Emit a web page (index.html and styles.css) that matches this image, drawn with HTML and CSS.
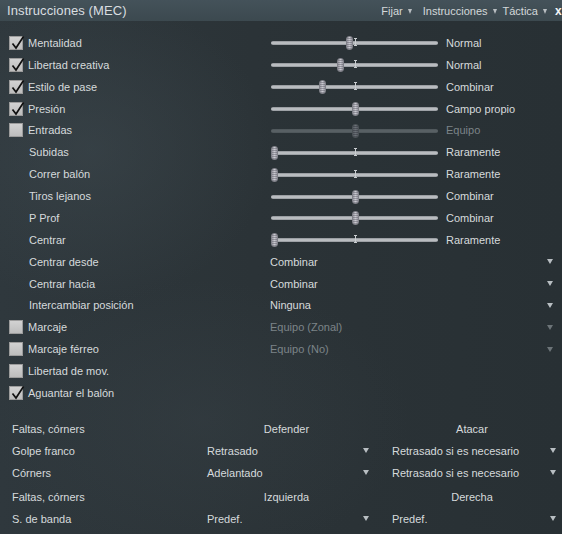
FILE: index.html
```html
<!DOCTYPE html>
<html lang="es">
<head>
<meta charset="utf-8">
<link rel="stylesheet" href="styles.css">
</head>
<body>
<div class="window">
  <div class="titlebar">
    <div class="title">Instrucciones (MEC)</div>
    <div class="menu">
      <span class="mi m1">Fijar<i class="tri"></i></span>
      <span class="mi m2">Instrucciones<i class="tri"></i></span>
      <span class="mi m3">Táctica<i class="tri"></i></span>
      <span class="close">x</span>
    </div>
  </div>

  <div class="list">
    <div class="row">
      <div class="left"><span class="chk on"><svg viewBox="0 0 14 14"><path d="M2.5 7.5 L6 12 L13.5 0.5"/></svg></span><span class="lab">Mentalidad</span></div>
      <div class="slider"><div class="track"></div><div class="mark" style="left:82.5px"></div><div class="thumb" style="left:74.5px"></div></div>
      <span class="val">Normal</span>
    </div>
    <div class="row">
      <div class="left"><span class="chk on"><svg viewBox="0 0 14 14"><path d="M2.5 7.5 L6 12 L13.5 0.5"/></svg></span><span class="lab">Libertad creativa</span></div>
      <div class="slider"><div class="track"></div><div class="mark" style="left:82.5px"></div><div class="thumb" style="left:65.5px"></div></div>
      <span class="val">Normal</span>
    </div>
    <div class="row">
      <div class="left"><span class="chk on"><svg viewBox="0 0 14 14"><path d="M2.5 7.5 L6 12 L13.5 0.5"/></svg></span><span class="lab">Estilo de pase</span></div>
      <div class="slider"><div class="track"></div><div class="mark" style="left:82.5px"></div><div class="thumb" style="left:47.5px"></div></div>
      <span class="val">Combinar</span>
    </div>
    <div class="row">
      <div class="left"><span class="chk on"><svg viewBox="0 0 14 14"><path d="M2.5 7.5 L6 12 L13.5 0.5"/></svg></span><span class="lab">Presión</span></div>
      <div class="slider"><div class="track"></div><div class="thumb" style="left:80.5px"></div></div>
      <span class="val">Campo propio</span>
    </div>
    <div class="row">
      <div class="left"><span class="chk"></span><span class="lab">Entradas</span></div>
      <div class="slider disabled"><div class="track"></div><div class="thumb" style="left:80.5px"></div></div>
      <span class="val dim">Equipo</span>
    </div>
    <div class="row">
      <div class="left"><span class="lab sub">Subidas</span></div>
      <div class="slider"><div class="track"></div><div class="mark" style="left:82.5px"></div><div class="thumb" style="left:0px"></div></div>
      <span class="val">Raramente</span>
    </div>
    <div class="row">
      <div class="left"><span class="lab sub">Correr balón</span></div>
      <div class="slider"><div class="track"></div><div class="mark" style="left:82.5px"></div><div class="thumb" style="left:0px"></div></div>
      <span class="val">Raramente</span>
    </div>
    <div class="row">
      <div class="left"><span class="lab sub">Tiros lejanos</span></div>
      <div class="slider"><div class="track"></div><div class="thumb" style="left:80.5px"></div></div>
      <span class="val">Combinar</span>
    </div>
    <div class="row">
      <div class="left"><span class="lab sub">P Prof</span></div>
      <div class="slider"><div class="track"></div><div class="thumb" style="left:80.5px"></div></div>
      <span class="val">Combinar</span>
    </div>
    <div class="row">
      <div class="left"><span class="lab sub">Centrar</span></div>
      <div class="slider"><div class="track"></div><div class="mark" style="left:82.5px"></div><div class="thumb" style="left:0px"></div></div>
      <span class="val">Raramente</span>
    </div>
    <div class="row">
      <div class="left"><span class="lab sub">Centrar desde</span></div>
      <div class="drop wide"><span>Combinar</span><i class="tri"></i></div>
    </div>
    <div class="row">
      <div class="left"><span class="lab sub">Centrar hacia</span></div>
      <div class="drop wide"><span>Combinar</span><i class="tri"></i></div>
    </div>
    <div class="row">
      <div class="left"><span class="lab sub">Intercambiar posición</span></div>
      <div class="drop wide"><span>Ninguna</span><i class="tri"></i></div>
    </div>
    <div class="row">
      <div class="left"><span class="chk"></span><span class="lab">Marcaje</span></div>
      <div class="drop wide dim"><span>Equipo (Zonal)</span><i class="tri"></i></div>
    </div>
    <div class="row">
      <div class="left"><span class="chk"></span><span class="lab">Marcaje férreo</span></div>
      <div class="drop wide dim"><span>Equipo (No)</span><i class="tri"></i></div>
    </div>
    <div class="row">
      <div class="left"><span class="chk"></span><span class="lab">Libertad de mov.</span></div>
    </div>
    <div class="row">
      <div class="left"><span class="chk on"><svg viewBox="0 0 14 14"><path d="M2.5 7.5 L6 12 L13.5 0.5"/></svg></span><span class="lab">Aguantar el balón</span></div>
    </div>
  </div>

  <div class="setp">
    <div class="sgrid">
      <span class="slab">Faltas, córners</span>
      <span class="head">Defender</span>
      <span class="head">Atacar</span>
      <span class="slab">Golpe franco</span>
      <div class="drop c1"><span>Retrasado</span><i class="tri"></i></div>
      <div class="drop c2"><span>Retrasado si es necesario</span><i class="tri"></i></div>
      <span class="slab">Córners</span>
      <div class="drop c1"><span>Adelantado</span><i class="tri"></i></div>
      <div class="drop c2"><span>Retrasado si es necesario</span><i class="tri"></i></div>
    </div>
    <div class="sgrid second">
      <span class="slab">Faltas, córners</span>
      <span class="head">Izquierda</span>
      <span class="head">Derecha</span>
      <span class="slab">S. de banda</span>
      <div class="drop c1"><span>Predef.</span><i class="tri"></i></div>
      <div class="drop c2"><span>Predef.</span><i class="tri"></i></div>
    </div>
  </div>
</div>
</body>
</html>
```
FILE: styles.css
```css
html, body {
  margin: 0;
  padding: 0;
}
body {
  width: 562px;
  height: 534px;
  overflow: hidden;
  font-family: "Liberation Sans", Arial, sans-serif;
  font-size: 11px;
  color: #d6dadc;
  background: #2b3337;
}
.window {
  width: 562px;
  height: 534px;
  background:
    radial-gradient(ellipse 260px 220px at 90px 150px, rgba(70, 82, 88, 0.35), rgba(0,0,0,0) 70%),
    radial-gradient(ellipse 300px 200px at 200px 420px, rgba(60, 70, 76, 0.3), rgba(0,0,0,0) 70%),
    linear-gradient(90deg, #2f383d 0%, #2b3337 45%, #283034 100%);
}
.titlebar {
  height: 21px;
  display: flex;
  align-items: center;
  justify-content: space-between;
  padding-left: 7px;
  background: linear-gradient(#44525a, #3c494f);
  box-sizing: border-box;
}
.title {
  font-size: 13px;
  color: #d9dee0;
  letter-spacing: 0.1px;
}
.menu {
  display: flex;
  align-items: center;
  color: #d3d8da;
  font-size: 11px;
  padding-top: 1px;
}
.mi {
  display: flex;
  align-items: center;
}
.mi .tri {
  margin-left: 5px;
  border-left-width: 2.5px;
  border-right-width: 2.5px;
  border-top-width: 5px;
}
.m1 { margin-right: 11px; }
.m2 { margin-right: 6px; }
.m3 { margin-right: 8px; }
.close {
  font-weight: bold;
  font-size: 12px;
  color: #f2f4f5;
  width: 7px;
}
.tri {
  display: inline-block;
  width: 0;
  height: 0;
  border-left: 3px solid transparent;
  border-right: 3px solid transparent;
  border-top: 5px solid #b8bec2;
}
.list {
  padding-top: 11px;
}
.row {
  height: 21.875px;
  display: flex;
  align-items: center;
}
.left {
  width: 271px;
  padding-left: 9px;
  box-sizing: border-box;
  display: flex;
  align-items: center;
}
.chk {
  width: 14px;
  height: 14px;
  box-sizing: border-box;
  background: linear-gradient(#d2d2d2, #bdbdbd);
  border: 1px solid #9c9c9c;
  margin-right: 5px;
  position: relative;
}
.chk svg {
  position: absolute;
  left: 0;
  top: -1px;
  width: 14px;
  height: 14px;
  overflow: visible;
}
.chk path {
  fill: none;
  stroke: #101010;
  stroke-width: 1.7;
  stroke-linejoin: miter;
}
.lab {
  white-space: nowrap;
}
.lab.sub {
  padding-left: 20px;
}
.slider {
  position: relative;
  width: 167px;
  height: 15px;
}
.track {
  position: absolute;
  left: 0;
  right: 0;
  top: 6px;
  height: 4px;
  border-radius: 2px;
  background: linear-gradient(#8c9095, #c7cacd 50%, #909499);
}
.mark {
  position: absolute;
  top: 3px;
  width: 3px;
  height: 8px;
  box-sizing: border-box;
  border-top: 1px solid #c9cdd0;
  border-bottom: 1px solid #c9cdd0;
  background: linear-gradient(90deg, transparent 1px, #c9cdd0 1px, #c9cdd0 2px, transparent 2px);
}
.thumb {
  position: absolute;
  top: 1px;
  width: 7px;
  height: 14px;
  border-radius: 3px;
  box-sizing: border-box;
  background:
    repeating-linear-gradient(0deg, rgba(90,90,100,0.45) 0 1px, transparent 1px 2px),
    linear-gradient(90deg, #9a9aa3, #c9c9d0 50%, #9a9aa3);
  border: 1px solid #7f8088;
}
.slider.disabled .track {
  background: linear-gradient(#4c5458, #5c6468 50%, #4c5458);
}
.slider.disabled .thumb {
  background:
    repeating-linear-gradient(0deg, rgba(40,40,50,0.4) 0 1px, transparent 1px 2px),
    linear-gradient(90deg, #575d63, #6a7076 50%, #575d63);
  border-color: #4a5055;
}
.val {
  margin-left: 8px;
  white-space: nowrap;
}
.dim {
  color: #7c8488;
}
.drop {
  display: flex;
  align-items: center;
  justify-content: space-between;
  box-sizing: border-box;
}
.drop.wide {
  margin-left: -1px;
  width: 286px;
  padding-right: 3px;
}
.drop.dim .tri {
  border-top-color: #6c7478;
}
.setp {
  margin-top: 14px;
}
.sgrid {
  display: grid;
  grid-template-columns: 175px 171px 172px;
  column-gap: 14px;
  grid-auto-rows: 22px;
  align-items: center;
  padding-left: 12px;
}
.sgrid.second {
  margin-top: 2px;
}
.head {
  text-align: center;
}
.drop.c1 {
  padding-left: 6px;
  padding-right: 3px;
}
.drop.c2 {
  padding-left: 6px;
  padding-right: 2px;
}
```
